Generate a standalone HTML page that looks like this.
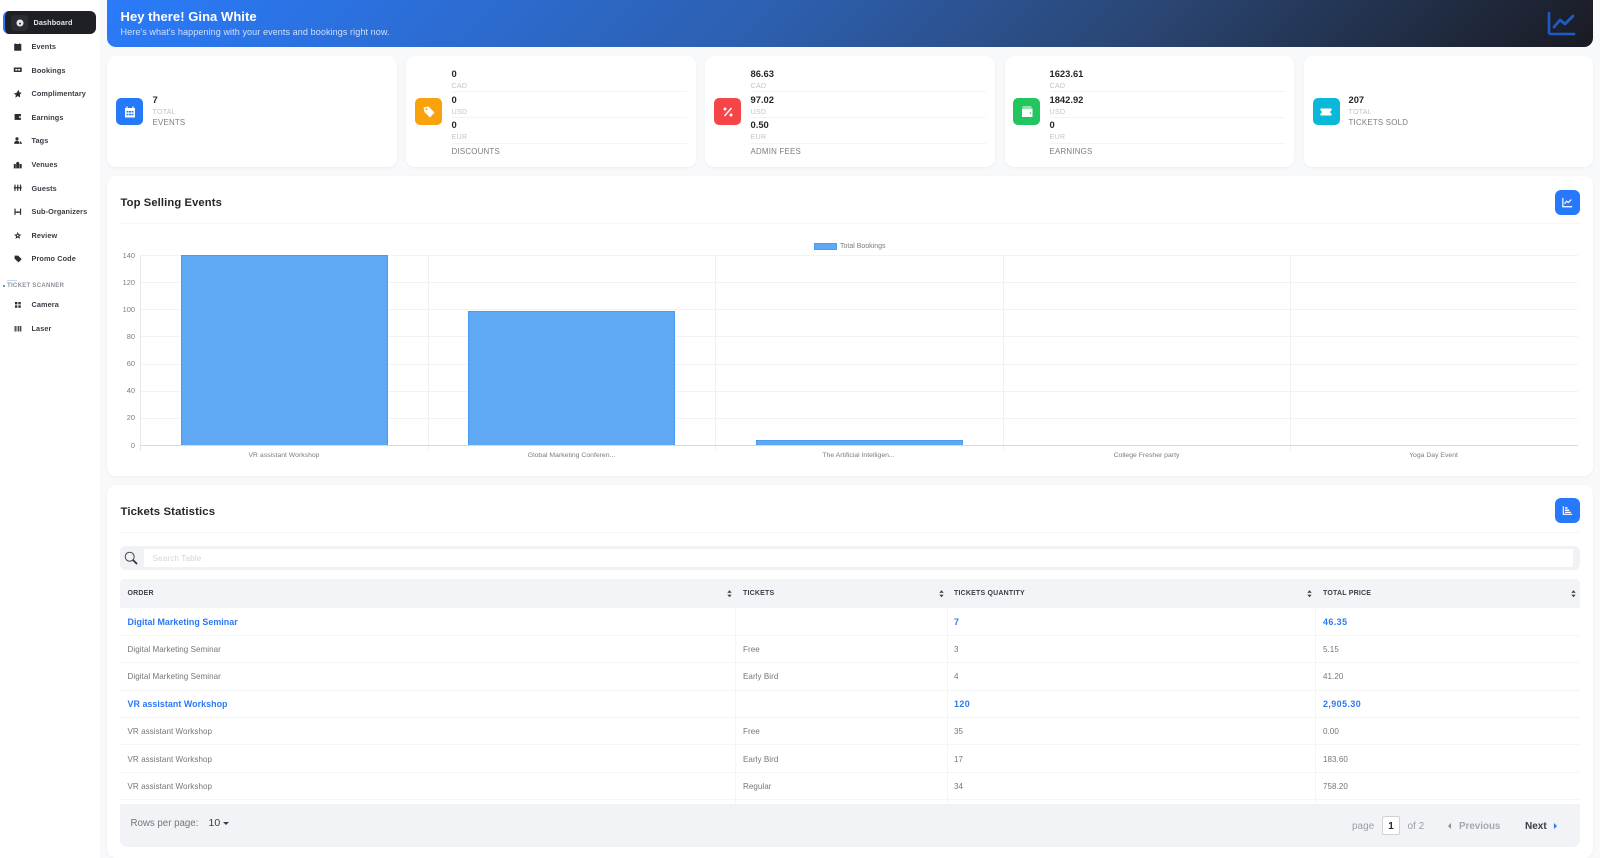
<!DOCTYPE html>
<html lang="en"><head><meta charset="utf-8"><title>Dashboard</title>
<style>
html,body{margin:0;padding:0;width:1600px;height:858px;overflow:hidden;background:#f8f9fb;font-family:"Liberation Sans",sans-serif}
.a{position:absolute}
.t{position:absolute;white-space:nowrap;height:20px;line-height:20px;margin-top:-10px}
.card{position:absolute;background:#fff;border-radius:9px;box-shadow:0 1px 3px rgba(20,30,50,.05)}
.nav{font-size:7.3px;font-weight:bold;color:#3a3d44;left:31.5px;letter-spacing:.1px}
.ni{position:absolute;left:13px;width:9.5px;height:9.5px;margin-top:-4.75px}
.ic{position:absolute;width:27px;height:27px;top:98px;border-radius:5px}
.ic svg{position:absolute;left:6.5px;top:6.5px}
.v{font-size:9.4px;font-weight:bold;color:#24262b}
.s{font-size:7.2px;color:#c4c4c4;letter-spacing:.2px}
.l{font-size:7.9px;color:#7b7d82;letter-spacing:.22px}
.hr{position:absolute;height:1px;background:#f3f4f5}
.y{font-size:7.4px;color:#7c7c7c;right:1465px;text-align:right}
.x{font-size:6.85px;color:#7c7c7c;transform:translateX(-50%)}
.gh{position:absolute;left:140px;width:1438px;height:1px;background:#f3f3f3}
.gv{position:absolute;top:255px;width:1px;height:196px;background:#f1f1f1}
.bar{position:absolute;background:#5ea8f4;border:1px solid #4a9cf2;border-bottom:0;box-sizing:border-box}
.th{font-size:7px;font-weight:bold;color:#3c3e44;letter-spacing:.2px}
.cv{position:absolute;width:1px;background:#f3f4f6}
.rl{position:absolute;left:120px;width:1460px;height:1px;background:#f4f5f6}
.b{font-size:8.9px;font-weight:bold;color:#2a78f5;letter-spacing:.05px}
.n{letter-spacing:.45px}
.d{font-size:8.05px;color:#74767b;letter-spacing:.05px}
.srt{position:absolute;top:589.5px;width:5px;height:7.5px}
</style></head><body>

<!-- sidebar -->
<div class="a" style="left:0;top:0;width:100px;height:858px;background:#fff"></div>
<div class="a" style="left:3px;top:11px;width:93px;height:23px;background:#1f2026;border-radius:6px;border-left:2.5px solid #2a7bf6;box-sizing:border-box"></div>
<div class="a" style="left:11px;top:15px;width:17px;height:16px;background:#2b2d33;border-radius:4px"></div>
<svg class="a" style="left:16px;top:19px" width="8" height="8" viewBox="0 0 8 8"><circle cx="4" cy="4" r="3.5" fill="#e8e8ea"/><circle cx="4" cy="4.6" r="1" fill="#2b2d33"/></svg>
<div class="t" style="left:33.5px;top:23px;font-size:7.3px;font-weight:bold;color:#e4e5e8;letter-spacing:.1px">Dashboard</div>

<svg class="ni" style="top:46.5px" viewBox="0 0 12 12"><path d="M2 3h8v7.500H2z M3.500 1.500v2 M8.500 1.500v2" fill="#2b2d33" stroke="#2b2d33"/></svg>
<div class="t nav" style="top:46.5px">Events</div>
<svg class="ni" style="top:70px" viewBox="0 0 12 12"><path d="M1 3.200h10v5.600H1z" fill="#2b2d33"/><path d="M3 5h6v2H3z" fill="#fff"/><path d="M5.500 5h1v2h-1z" fill="#2b2d33"/></svg>
<div class="t nav" style="top:70.5px">Bookings</div>
<svg class="ni" style="top:93.5px" viewBox="0 0 12 12"><path d="M7 1l1 3.200 3 .6-2.200 2L9 10.500 6 9l-3 2 .6-3.500L1 5.500l3.400-.5z" fill="#2b2d33"/></svg>
<div class="t nav" style="top:93.5px">Complimentary</div>
<svg class="ni" style="top:117px" viewBox="0 0 12 12"><path d="M2 2.500h8v7.500H2z" fill="#2b2d33"/><path d="M7.500 5.500H10v1.800H7.500z" fill="#fff"/></svg>
<div class="t nav" style="top:117.5px">Earnings</div>
<svg class="ni" style="top:141px" viewBox="0 0 12 12"><circle cx="5" cy="3.500" r="2" fill="#2b2d33"/><path d="M1.500 10c0-3 1.500-4 3.500-4s3 1 3.300 4z" fill="#2b2d33"/><path d="M8.500 7h1.500l1.500 3H9z" fill="#2b2d33"/></svg>
<div class="t nav" style="top:141px">Tags</div>
<svg class="ni" style="top:164.5px" viewBox="0 0 12 12"><path d="M1 5h2.500v5.500H1zM8.500 5H11v5.500H8.500zM4 3.500l2-1.500 2 1.500v7H4z" fill="#2b2d33"/></svg>
<div class="t nav" style="top:164.5px">Venues</div>
<svg class="ni" style="top:188px" viewBox="0 0 12 12"><path d="M2.500 2v8M6 2v8M9.500 2v8M1 6h10" stroke="#2b2d33" stroke-width="1.500" fill="none"/></svg>
<div class="t nav" style="top:188.5px">Guests</div>
<svg class="ni" style="top:212px" viewBox="0 0 12 12"><path d="M2.500 2v8M9.500 2v8M2.500 6.500h7" stroke="#2b2d33" stroke-width="1.500" fill="none"/><circle cx="6" cy="6.500" r="1.200" fill="#2b2d33"/></svg>
<div class="t nav" style="top:212px">Sub-Organizers</div>
<svg class="ni" style="top:235.5px" viewBox="0 0 12 12"><path d="M6 1l1.300 3.200 3.400.3-2.600 2.200.8 3.300L6 8.200 3.100 10l.8-3.300L1.300 4.500l3.400-.3z" fill="#2b2d33"/><circle cx="6" cy="5.800" r="1" fill="#fff"/></svg>
<div class="t nav" style="top:235.5px">Review</div>
<svg class="ni" style="top:259px" viewBox="0 0 12 12"><path d="M2 2h4.500L11 6.500 7 10.500 2 6z" fill="#2b2d33"/></svg>
<div class="t nav" style="top:259px">Promo Code</div>

<div class="a" style="left:7px;top:280px;width:10px;height:1px;background:#bcd6f8"></div>
<div class="a" style="left:3px;top:284.500px;width:2px;height:2px;border-radius:50%;background:#3d6fb0"></div>
<div class="t" style="left:7px;top:285.5px;font-size:6px;font-weight:bold;color:#8d9098;letter-spacing:.3px">TICKET SCANNER</div>
<svg class="ni" style="top:305px" viewBox="0 0 12 12"><path d="M2.500 2.500h3v3h-3zM6.800 2.500h3v3h-3zM2.500 6.800h3v3h-3zM6.800 6.800h3v3h-3z" fill="#2b2d33"/></svg>
<div class="t nav" style="top:305px">Camera</div>
<svg class="ni" style="top:329px" viewBox="0 0 12 12"><path d="M2 2.500h1.500v7H2zM4.500 2.500h1v7h-1zM6.500 2.500h1.500v7H6.500zM9 2.500h1.500v7H9z" fill="#2b2d33"/></svg>
<div class="t nav" style="top:329px">Laser</div>

<!-- header -->
<div class="a" style="left:107px;top:0;width:1486px;height:47px;border-radius:0 0 9px 9px;background:linear-gradient(135deg,#2a7bfb 0%,#2d5fae 45%,#2a4572 70%,#1a1b22 100%)"></div>
<div class="t" style="left:120.500px;top:17px;font-size:13px;font-weight:bold;color:#fff;letter-spacing:.05px">Hey there! Gina White</div>
<div class="t" style="left:120.500px;top:31.500px;font-size:9.05px;color:#cfe0fb;letter-spacing:.08px">Here's what's happening with your events and bookings right now.</div>
<svg class="a" style="left:1547px;top:11px" width="29" height="25" viewBox="0 0 29 25"><path d="M2 2v19.500a1.500 1.500 0 0 0 1.500 1.500H27" fill="none" stroke="#1d5bc9" stroke-width="2.600" stroke-linecap="round"/><path d="M7 16l6-7 5 4 8-8" fill="none" stroke="#1d5bc9" stroke-width="2.800" stroke-linecap="round" stroke-linejoin="round"/></svg>

<!-- stat cards -->
<div class="card" style="left:107px;top:56px;width:290px;height:111px"></div>
<div class="card" style="left:406px;top:56px;width:290px;height:111px"></div>
<div class="card" style="left:705px;top:56px;width:290px;height:111px"></div>
<div class="card" style="left:1004.500px;top:56px;width:289.500px;height:111px"></div>
<div class="card" style="left:1303.500px;top:56px;width:289.500px;height:111px"></div>

<div class="ic" style="left:116px;background:#2679fb"><svg width="14" height="14" viewBox="0 0 14 14"><path d="M2 3h10v9.500H2z" fill="#fff"/><path d="M4 1.500v2M10 1.500v2" stroke="#fff" stroke-width="1.300"/><path d="M3.500 6h2v1.500h-2zM6 6h2v1.500H6zM8.500 6h2v1.500h-2zM3.500 8.800h2v1.500h-2zM6 8.800h2v1.500H6zM8.500 8.800h2v1.500h-2z" fill="#2679fb"/></svg></div>
<div class="t v" style="left:152.500px;top:99.500px">7</div>
<div class="t s" style="left:152.500px;top:111.500px">TOTAL</div>
<div class="t l" style="left:152.500px;top:123px">EVENTS</div>

<div class="ic" style="left:415px;background:#f9a20b"><svg width="14" height="14" viewBox="0 0 14 14"><path d="M1.500 2.500L6.500 1.500l6 6-4.500 5-5.500-5.500z" fill="#fff"/><circle cx="4.500" cy="4.300" r="1" fill="#f9a20b"/></svg></div>
<div class="t v" style="left:451.500px;top:74px">0</div><div class="t s" style="left:451.500px;top:85.500px">CAD</div><div class="hr" style="left:451.500px;top:90.500px;width:235px"></div>
<div class="t v" style="left:451.500px;top:99.500px">0</div><div class="t s" style="left:451.500px;top:111.500px">USD</div><div class="hr" style="left:451.500px;top:116.500px;width:235px"></div>
<div class="t v" style="left:451.500px;top:125px">0</div><div class="t s" style="left:451.500px;top:137px">EUR</div><div class="hr" style="left:451.500px;top:142.500px;width:235px"></div>
<div class="t l" style="left:451.500px;top:151.500px">DISCOUNTS</div>

<div class="ic" style="left:714px;background:#f44548"><svg width="14" height="14" viewBox="0 0 14 14"><path d="M10.500 3L3.500 11" stroke="#fff" stroke-width="1.400"/><circle cx="4" cy="4" r="1.500" fill="#fff"/><circle cx="10" cy="10" r="1.500" fill="#fff"/></svg></div>
<div class="t v" style="left:750.500px;top:74px">86.63</div><div class="t s" style="left:750.500px;top:85.500px">CAD</div><div class="hr" style="left:750.500px;top:90.500px;width:235px"></div>
<div class="t v" style="left:750.500px;top:99.500px">97.02</div><div class="t s" style="left:750.500px;top:111.500px">USD</div><div class="hr" style="left:750.500px;top:116.500px;width:235px"></div>
<div class="t v" style="left:750.500px;top:125px">0.50</div><div class="t s" style="left:750.500px;top:137px">EUR</div><div class="hr" style="left:750.500px;top:142.500px;width:235px"></div>
<div class="t l" style="left:750.500px;top:151.500px">ADMIN FEES</div>

<div class="ic" style="left:1013px;background:#22c55e"><svg width="14" height="14" viewBox="0 0 14 14"><path d="M2 3.500h10.500v8.500H2z" fill="#fff"/><path d="M2.500 2h9" stroke="#fff" stroke-width="1"/><circle cx="10.500" cy="8" r=".8" fill="#22c55e"/></svg></div>
<div class="t v" style="left:1049.500px;top:74px">1623.61</div><div class="t s" style="left:1049.500px;top:85.500px">CAD</div><div class="hr" style="left:1049.500px;top:90.500px;width:235px"></div>
<div class="t v" style="left:1049.500px;top:99.500px">1842.92</div><div class="t s" style="left:1049.500px;top:111.500px">USD</div><div class="hr" style="left:1049.500px;top:116.500px;width:235px"></div>
<div class="t v" style="left:1049.500px;top:125px">0</div><div class="t s" style="left:1049.500px;top:137px">EUR</div><div class="hr" style="left:1049.500px;top:142.500px;width:235px"></div>
<div class="t l" style="left:1049.500px;top:151.500px">EARNINGS</div>

<div class="ic" style="left:1312.500px;background:#0cb8d9"><svg width="14" height="14" viewBox="0 0 14 14"><path d="M1.500 3.500h11v2.200a1.300 1.300 0 0 0 0 2.600v2.200h-11V8.300a1.300 1.300 0 0 0 0-2.600z" fill="#fff"/></svg></div>
<div class="t v" style="left:1348.500px;top:99.500px">207</div>
<div class="t s" style="left:1348.500px;top:111.500px">TOTAL</div>
<div class="t l" style="left:1348.500px;top:123px">TICKETS SOLD</div>

<!-- chart card -->
<div class="card" style="left:107px;top:176px;width:1486px;height:300px"></div>
<div class="t" style="left:120.500px;top:203px;font-size:11.2px;font-weight:bold;color:#24262b;letter-spacing:.12px">Top Selling Events</div>
<div class="a" style="left:1555px;top:190px;width:25px;height:25px;border-radius:6px;background:#2679fb"></div>
<svg class="a" style="left:1562px;top:197px" width="11" height="11" viewBox="0 0 13 13"><path d="M1 1v10.500h11" fill="none" stroke="#fff" stroke-width="1.400"/><path d="M3 8l2.500-3 2 1.500L11 3" fill="none" stroke="#fff" stroke-width="1.400"/></svg>
<div class="hr" style="left:120px;top:223px;width:1460px;background:#f6f7f8"></div>

<div class="a" style="left:814px;top:243px;width:23px;height:7px;background:#5ea8f4;border:1px solid #4a9cf2;box-sizing:border-box"></div>
<div class="t" style="left:840px;top:246.500px;font-size:7px;color:#7c7c7c">Total Bookings</div>

<div class="gh" style="top:255px"></div><div class="gh" style="top:282px"></div><div class="gh" style="top:309px"></div><div class="gh" style="top:336px"></div><div class="gh" style="top:364px"></div><div class="gh" style="top:391px"></div><div class="gh" style="top:418px"></div>
<div class="gv" style="left:140px;background:#e6e6e6"></div><div class="gv" style="left:428px"></div><div class="gv" style="left:715px"></div><div class="gv" style="left:1003px"></div><div class="gv" style="left:1290px"></div>
<div class="bar" style="left:181px;top:255px;width:207px;height:190px"></div>
<div class="bar" style="left:468px;top:311px;width:207px;height:134px"></div>
<div class="bar" style="left:756px;top:440px;width:207px;height:5px"></div>
<div class="a" style="left:140px;top:445px;width:1438px;height:1px;background:#d9d9d9"></div>

<div class="t y" style="top:255.500px">140</div><div class="t y" style="top:282.500px">120</div><div class="t y" style="top:310px">100</div><div class="t y" style="top:337px">80</div><div class="t y" style="top:364px">60</div><div class="t y" style="top:391px">40</div><div class="t y" style="top:418px">20</div><div class="t y" style="top:445.500px">0</div>
<div class="t x" style="left:284px;top:455.500px">VR assistant Workshop</div>
<div class="t x" style="left:571.500px;top:455.500px">Global Marketing Conferen...</div>
<div class="t x" style="left:858.500px;top:455.500px">The Artificial Intelligen...</div>
<div class="t x" style="left:1146.500px;top:455.500px">College Fresher party</div>
<div class="t x" style="left:1433.500px;top:455.500px">Yoga Day Event</div>

<!-- table card -->
<div class="card" style="left:107px;top:485px;width:1486px;height:373px"></div>
<div class="t" style="left:120.500px;top:512px;font-size:11.350px;font-weight:bold;color:#24262b;letter-spacing:.12px">Tickets Statistics</div>
<div class="a" style="left:1555px;top:498px;width:25px;height:25px;border-radius:6px;background:#2679fb"></div>
<svg class="a" style="left:1562px;top:505px" width="11" height="11" viewBox="0 0 13 13"><path d="M1.500 1.500v9.500h10.500" fill="none" stroke="#fff" stroke-width="1.300"/><path d="M3.500 2.500h3v1.800h-3zM3.500 5.300h5v1.800h-5zM3.500 8h7v1.500h-7z" fill="#fff"/></svg>
<div class="hr" style="left:120px;top:532px;width:1460px;background:#f6f7f8"></div>

<div class="a" style="left:120px;top:546px;width:1460px;height:24px;border-radius:6px;background:#f1f2f5"></div>
<div class="a" style="left:144px;top:549px;width:1429px;height:18px;background:#fff;border-radius:2px"></div>
<svg class="a" style="left:124px;top:551px" width="14" height="14" viewBox="0 0 14 14"><circle cx="5.700" cy="5.700" r="4.500" fill="none" stroke="#44474d" stroke-width="1"/><path d="M9 9l4 4" stroke="#2d2f34" stroke-width="1.700"/></svg>
<div class="t" style="left:152.500px;top:558.500px;font-size:8.200px;color:#d4d5d8;letter-spacing:.1px">Search Table</div>

<div class="a" style="left:120px;top:579px;width:1460px;height:29px;background:#f3f4f7;border-radius:4px 4px 0 0"></div>
<div class="cv" style="left:735px;top:579px;height:225px"></div>
<div class="cv" style="left:947px;top:579px;height:225px"></div>
<div class="cv" style="left:1315px;top:579px;height:225px"></div>
<div class="t th" style="left:127.500px;top:594px">ORDER</div>
<div class="t th" style="left:743px;top:594px">TICKETS</div>
<div class="t th" style="left:954px;top:594px">TICKETS QUANTITY</div>
<div class="t th" style="left:1323px;top:594px">TOTAL PRICE</div>
<svg class="srt" style="left:727px" viewBox="0 0 6 9"><path d="M3 0l2.600 3.500H.4zM3 9L.4 5.500h5.200z" fill="#4a4c52"/></svg>
<svg class="srt" style="left:938.500px" viewBox="0 0 6 9"><path d="M3 0l2.600 3.500H.4zM3 9L.4 5.500h5.200z" fill="#4a4c52"/></svg>
<svg class="srt" style="left:1307px" viewBox="0 0 6 9"><path d="M3 0l2.600 3.500H.4zM3 9L.4 5.500h5.200z" fill="#4a4c52"/></svg>
<svg class="srt" style="left:1570.500px" viewBox="0 0 6 9"><path d="M3 0l2.600 3.500H.4zM3 9L.4 5.500h5.200z" fill="#4a4c52"/></svg>

<div class="rl" style="top:635px"></div><div class="rl" style="top:662px"></div><div class="rl" style="top:690px"></div><div class="rl" style="top:717px"></div><div class="rl" style="top:744px"></div><div class="rl" style="top:772px"></div><div class="rl" style="top:799px"></div>

<div class="t b" style="left:127.500px;top:621.500px">Digital Marketing Seminar</div><div class="t b n" style="left:954px;top:621.500px">7</div><div class="t b n" style="left:1323px;top:621.500px">46.35</div>
<div class="t d" style="left:127.500px;top:650px">Digital Marketing Seminar</div><div class="t d" style="left:743px;top:650px">Free</div><div class="t d" style="left:954px;top:650px">3</div><div class="t d" style="left:1323px;top:650px">5.15</div>
<div class="t d" style="left:127.500px;top:677px">Digital Marketing Seminar</div><div class="t d" style="left:743px;top:677px">Early Bird</div><div class="t d" style="left:954px;top:677px">4</div><div class="t d" style="left:1323px;top:677px">41.20</div>
<div class="t b" style="left:127.500px;top:704px">VR assistant Workshop</div><div class="t b n" style="left:954px;top:704px">120</div><div class="t b n" style="left:1323px;top:704px">2,905.30</div>
<div class="t d" style="left:127.500px;top:732px">VR assistant Workshop</div><div class="t d" style="left:743px;top:732px">Free</div><div class="t d" style="left:954px;top:732px">35</div><div class="t d" style="left:1323px;top:732px">0.00</div>
<div class="t d" style="left:127.500px;top:760px">VR assistant Workshop</div><div class="t d" style="left:743px;top:760px">Early Bird</div><div class="t d" style="left:954px;top:760px">17</div><div class="t d" style="left:1323px;top:760px">183.60</div>
<div class="t d" style="left:127.500px;top:787px">VR assistant Workshop</div><div class="t d" style="left:743px;top:787px">Regular</div><div class="t d" style="left:954px;top:787px">34</div><div class="t d" style="left:1323px;top:787px">758.20</div>

<!-- footer -->
<div class="a" style="left:120px;top:804px;width:1460px;height:43px;background:#f2f3f6;border-radius:0 0 7px 7px"></div>
<div class="t" style="left:130.500px;top:823.500px;font-size:9.7px;color:#74767b">Rows per page:</div>
<div class="t" style="left:208.500px;top:823px;font-size:10.500px;color:#3a3c42">10</div>
<div class="a" style="left:222.500px;top:821.500px;border:3px solid transparent;border-top:3.500px solid #3a3c42;border-bottom:0"></div>
<div class="t" style="left:1352px;top:827px;font-size:10px;color:#9b9da2">page</div>
<div class="a" style="left:1382px;top:816px;width:18px;height:19px;background:#fff;border:1px solid #cfd1d5;border-radius:2px;box-sizing:border-box"></div>
<div class="t" style="left:1382px;width:18px;text-align:center;top:827px;font-size:10px;font-weight:bold;color:#24262b">1</div>
<div class="t" style="left:1407.500px;top:827px;font-size:10px;color:#9b9da2">of 2</div>
<div class="a" style="left:1448px;top:822.500px;border:3px solid transparent;border-right:3px solid #8d8f94;border-left:0"></div>
<div class="t" style="left:1459px;top:827px;font-size:9.8px;font-weight:bold;color:#a5a7ac">Previous</div>
<div class="t" style="left:1525px;top:827px;font-size:10px;font-weight:bold;color:#3a3c42">Next</div>
<div class="a" style="left:1554px;top:822.500px;border:3px solid transparent;border-left:3px solid #2a7bf6;border-right:0"></div>
</body></html>
